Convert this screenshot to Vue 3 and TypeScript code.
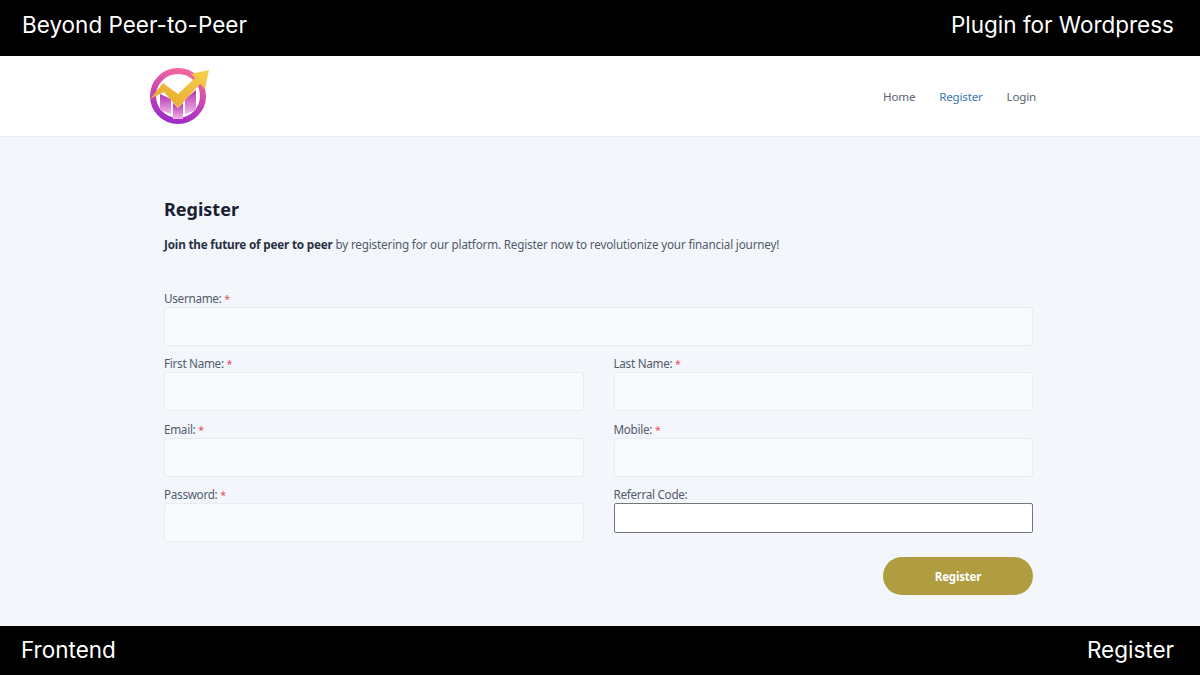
<script setup lang="ts">
interface Field { label: string; required: boolean; plain?: boolean }
const rows: Field[][] = [
  [{ label: 'First Name:', required: true }, { label: 'Last Name:', required: true }],
  [{ label: 'Email:', required: true }, { label: 'Mobile:', required: true }],
  [{ label: 'Password:', required: true }, { label: 'Referral Code:', required: false, plain: true }],
]
</script>

<template>
  <div class="page">
    <div class="banner top">
      <span>Beyond Peer-to-Peer</span>
      <span>Plugin for Wordpress</span>
    </div>
    <header class="nav">
      <svg class="logo" viewBox="0 0 60 58" width="60" height="58">
        <defs>
          <linearGradient id="ring" x1="0.6" y1="0" x2="0.3" y2="1">
            <stop offset="0" stop-color="#f2669c" />
            <stop offset="0.5" stop-color="#cb45b4" />
            <stop offset="1" stop-color="#9c2cc6" />
          </linearGradient>
          <linearGradient id="bar" x1="0" y1="0" x2="0" y2="1">
            <stop offset="0" stop-color="#b530b4" />
            <stop offset="1" stop-color="#f0b8e8" />
          </linearGradient>
          <linearGradient id="arrow" x1="0" y1="1" x2="1" y2="0">
            <stop offset="0" stop-color="#e6a52e" />
            <stop offset="1" stop-color="#f6d04c" />
          </linearGradient>
        </defs>
        <circle cx="29" cy="29" r="25" fill="#fff" stroke="url(#ring)" stroke-width="6" />
        <path d="M11 27 L22 32 V47 L11 43 Z" fill="url(#bar)" />
        <path d="M24 36 L29 41 L34 36 V52 H24 Z" fill="url(#bar)" />
        <path d="M36 32 L47 23 V43 L36 47 Z" fill="url(#bar)" />
        <path d="M1 32 L14 16 L29 27 L46 11 L42 7 L60 3 L56 22 L51 17 L29 41 L15 25 Z" fill="url(#arrow)" />
      </svg>
      <nav class="links">
        <a>Home</a>
        <a class="active">Register</a>
        <a>Login</a>
      </nav>
    </header>
    <main class="content">
      <h1>Register</h1>
      <p class="intro"><strong>Join the future of peer to peer</strong> by registering for our platform. Register now to revolutionize your financial journey!</p>
      <form class="form" @submit.prevent>
        <div class="field">
          <label>Username: <em>*</em></label>
          <div class="input"></div>
        </div>
        <div v-for="(row, i) in rows" :key="i" class="row">
          <div v-for="f in row" :key="f.label" class="field">
            <label>{{ f.label }} <em v-if="f.required">*</em></label>
            <div class="input" :class="{ plain: f.plain }"></div>
          </div>
        </div>
        <div class="actions">
          <button type="submit">Register</button>
        </div>
      </form>
    </main>
    <div class="banner bottom">
      <span>Frontend</span>
      <span>Register</span>
    </div>
  </div>
</template>

<style>
html, body { margin: 0; padding: 0; }
</style>

<style scoped>
.page {
  width: 1200px;
  height: 675px;
  display: flex;
  flex-direction: column;
  overflow: hidden;
  background: #f3f6fb;
  font-family: "Noto Sans", "Open Sans", sans-serif;
}
.banner {
  background: #000;
  color: #fff;
  display: flex;
  justify-content: space-between;
  align-items: center;
  font-family: Inter, "Noto Sans", sans-serif;
  font-size: 22.5px;
  flex: none;
}
.top { height: 56px; padding: 0 26px 7px 22px; box-sizing: border-box; }
.bottom { height: 49px; padding: 0 26px 3px 21px; box-sizing: border-box; }
.nav {
  height: 81px;
  flex: none;
  box-sizing: border-box;
  background: #fff;
  border-bottom: 1px solid #e8ebf0;
  padding: 11px 164px 0 149px;
  display: flex;
  justify-content: space-between;
  align-items: flex-start;
}
.logo { display: block; }
.links {
  display: flex;
  gap: 24px;
  padding-top: 21px;
  font-size: 11.6px;
  letter-spacing: -0.2px;
  line-height: 17px;
  color: #5a6373;
}
.links .active { color: #3b74b4; }
.content {
  flex: 1;
  padding: 0 167px 0 164px;
}
h1 {
  margin: 61px 0 0;
  font-size: 18px;
  line-height: 22px;
  font-weight: 700;
  color: #1a2033;
}
.intro {
  margin: 16px 0 0;
  font-size: 11.7px;
  letter-spacing: -0.18px;
  line-height: 17px;
  color: #525b6b;
}
.intro strong { color: #283044; }
.form {
  margin-top: 37px;
  display: flex;
  flex-direction: column;
  gap: 9.7px;
}
.row {
  display: grid;
  grid-template-columns: 1fr 1fr;
  column-gap: 30px;
}
.field label {
  display: block;
  height: 17px;
  font-size: 11.7px;
  letter-spacing: -0.28px;
  line-height: 17px;
  color: #525b6b;
}
.field em { color: #e0505e; font-style: normal; font-size: 10.5px; }
.input {
  height: 38.8px;
  box-sizing: border-box;
  background: #f8fafc;
  border: 1px solid #e9edf3;
  border-radius: 3px;
}
.input.plain {
  height: 30px;
  background: #fff;
  border: 1px solid #767676;
  border-radius: 2px;
}
.actions {
  display: flex;
  justify-content: flex-end;
  margin-top: 5.5px;
}
button {
  width: 150px;
  height: 38px;
  border: 0;
  border-radius: 19px;
  background: #b09d41;
  color: #fff;
  font-family: inherit;
  font-size: 11.5px;
  letter-spacing: -0.2px;
  font-weight: 700;
}
</style>
